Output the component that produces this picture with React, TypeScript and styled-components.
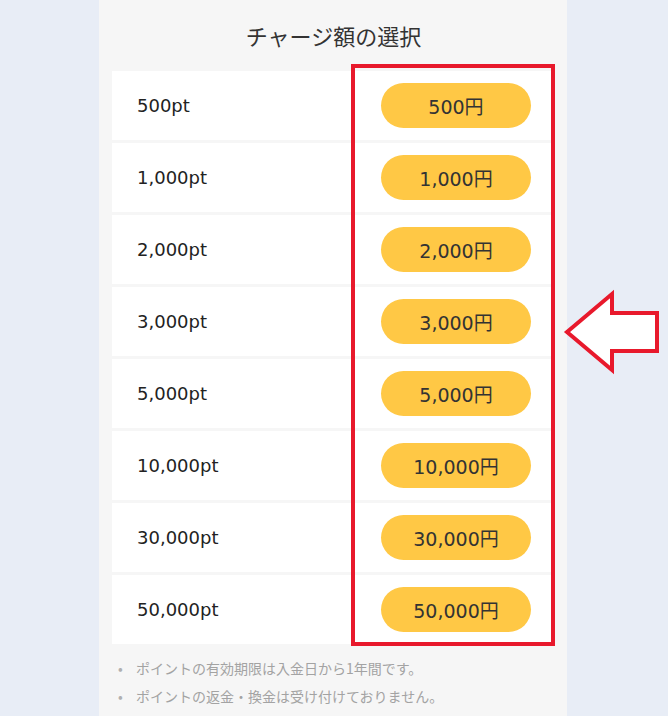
import styled, { createGlobalStyle } from 'styled-components'

const GlobalStyle = createGlobalStyle`
  html, body {
    margin: 0;
    padding: 0;
    background: #e8edf6;
    font-family: "DejaVu Sans", "Noto Sans CJK JP", sans-serif;
  }
`

const Page = styled.div`
  position: relative;
  width: 668px;
  height: 716px;
  overflow: hidden;
`

const Panel = styled.div`
  width: 468px;
  margin: 0 0 0 99px;
  background: #f6f6f6;
  padding: 20px 12px 0 13px;
  box-sizing: border-box;
  min-height: 716px;
`

const Title = styled.h2`
  margin: 0 0 21px 0;
  font-size: 22px;
  line-height: 30px;
  font-weight: 400;
  color: #333;
  text-align: center;
  font-family: "Noto Sans CJK JP", sans-serif;
`

const List = styled.div`
  display: flex;
  flex-direction: column;
  gap: 3px;
`

const Row = styled.div`
  display: flex;
  align-items: center;
  justify-content: space-between;
  height: 69px;
  background: #fff;
  padding: 0 24px 0 25px;
`

const Label = styled.span`
  font-size: 18px;
  color: #222;
`

const PriceButton = styled.button`
  width: 150px;
  height: 45px;
  border: none;
  border-radius: 23px;
  background: #ffc845;
  color: #333;
  font-family: "DejaVu Sans", "Noto Sans CJK JP", sans-serif;
  font-size: 19px;
  cursor: pointer;
`

const Notes = styled.ul`
  list-style: none;
  margin: 10px 0 0 0;
  padding: 0 0 0 6px;
`

const Note = styled.li`
  position: relative;
  font-family: "Noto Sans CJK JP", sans-serif;
  font-size: 14px;
  line-height: 28px;
  color: #a3a3a3;
  padding-left: 18px;
  &::before {
    content: '•';
    position: absolute;
    left: 0;
    color: #b0b0b0;
  }
`

const Highlight = styled.div`
  position: absolute;
  left: 351px;
  top: 64px;
  width: 204px;
  height: 582px;
  border: 4px solid #e8192c;
  box-sizing: border-box;
  pointer-events: none;
`

const Arrow = styled.svg`
  position: absolute;
  left: 560px;
  top: 288px;
`

const plans = [
  ['500pt', '500円'],
  ['1,000pt', '1,000円'],
  ['2,000pt', '2,000円'],
  ['3,000pt', '3,000円'],
  ['5,000pt', '5,000円'],
  ['10,000pt', '10,000円'],
  ['30,000pt', '30,000円'],
  ['50,000pt', '50,000円'],
]

export default function App() {
  return (
    <Page>
      <GlobalStyle />
      <Panel>
        <Title>チャージ額の選択</Title>
        <List>
          {plans.map(([pt, yen]) => (
            <Row key={pt}>
              <Label>{pt}</Label>
              <PriceButton>{yen}</PriceButton>
            </Row>
          ))}
        </List>
        <Notes>
          <Note>ポイントの有効期限は入金日から1年間です。</Note>
          <Note>ポイントの返金・換金は受け付けておりません。</Note>
        </Notes>
      </Panel>
      <Highlight />
      <Arrow width="104" height="90" viewBox="0 0 104 90">
        <polygon
          points="7,44 52,6 52,25 97,25 97,63 52,63 52,82"
          fill="#fff"
          stroke="#e8192c"
          strokeWidth="4"
          strokeLinejoin="miter"
        />
      </Arrow>
    </Page>
  )
}
